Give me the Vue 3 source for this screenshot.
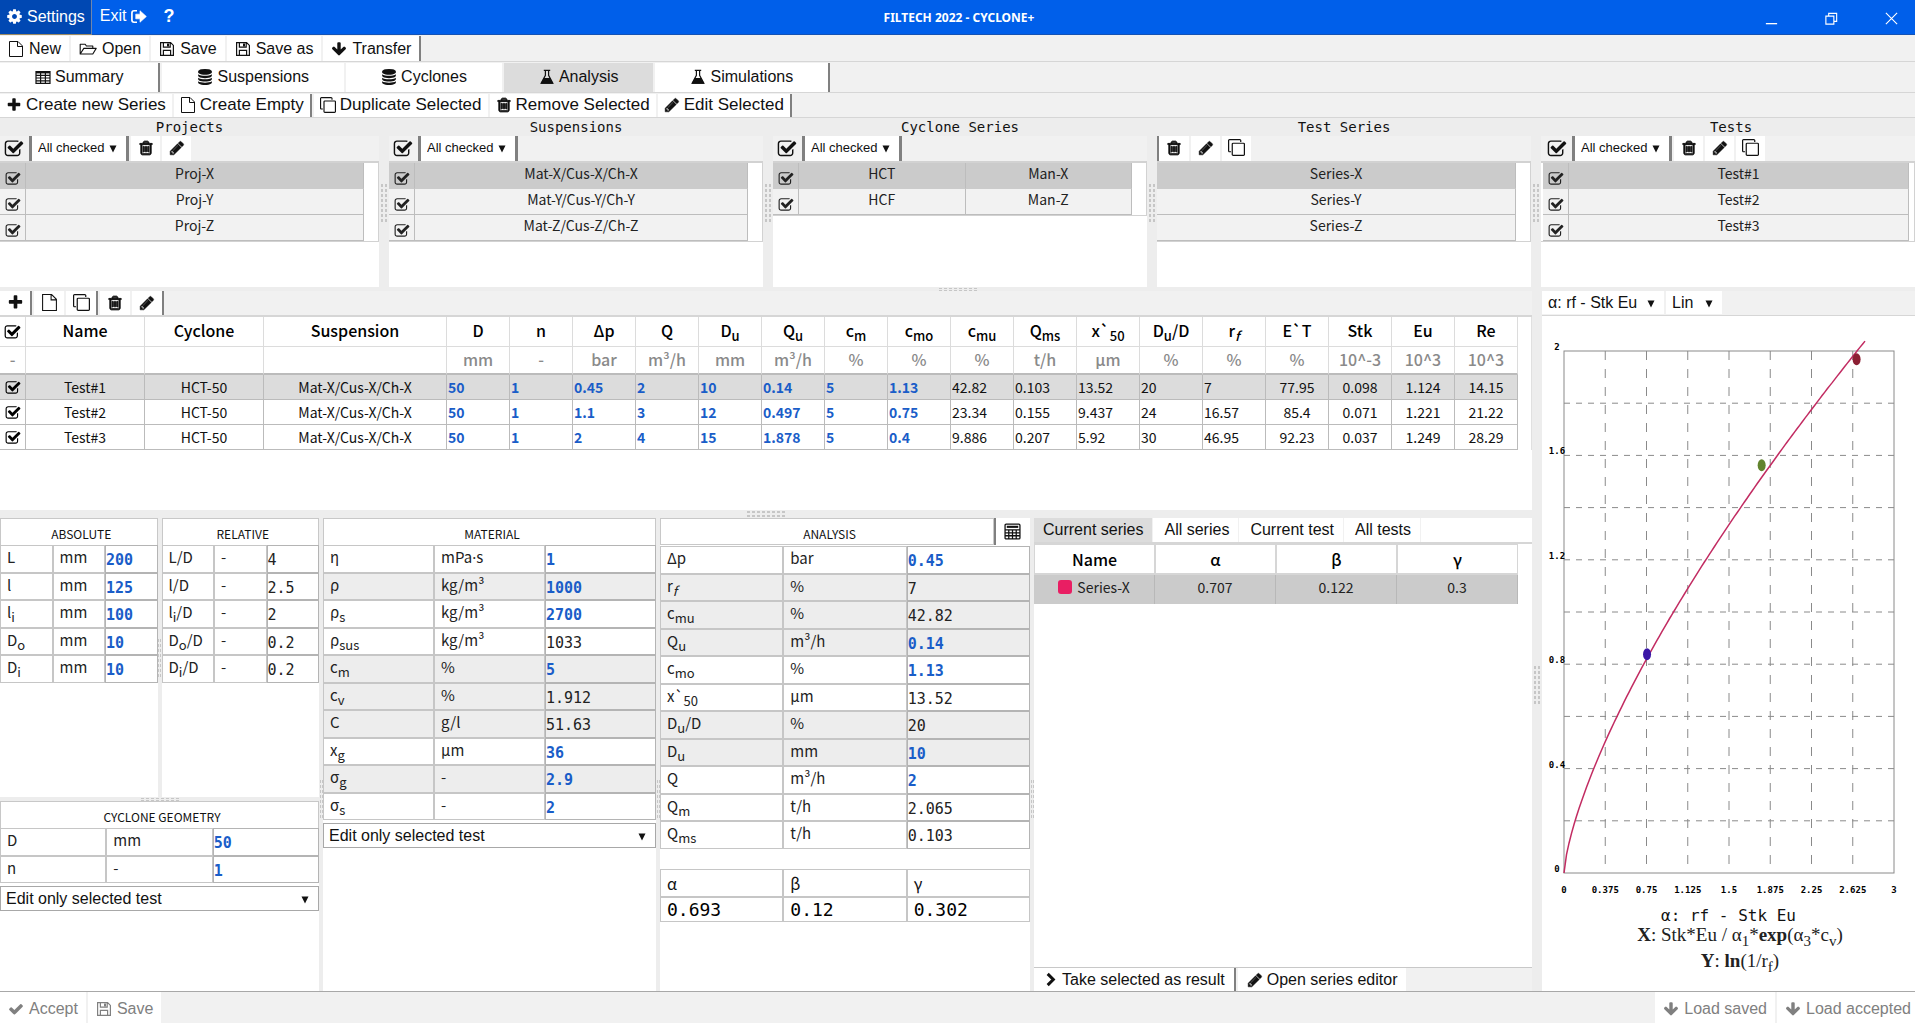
<script setup>
import { h } from 'vue'

const fa = (d, extra = {}) => ({ box: '0 0 1792 1792', parts: [['path', { d, fill: 'currentColor', ...extra }]] })
const line = (parts, box = '0 0 16 16') => ({
  box,
  parts: parts.map(([t, a]) => [t, { fill: 'none', stroke: 'currentColor', 'stroke-width': 1.2, ...a }]),
})

const glyphs = {
  check: fa('M1671 566q0 40-28 68l-724 724-136 136q-28 28-68 28t-68-28l-136-136-362-362q-28-28-28-68t28-68l136-136q28-28 68-28t68 28l294 295 656-657q28-28 68-28t68 28l136 136q28 28 28 68z'),
  checked: fa('M1472 930v318q0 119-84.5 203.5t-203.5 84.5h-832q-119 0-203.5-84.5t-84.5-203.5v-832q0-119 84.5-203.5t203.5-84.5h832q63 0 117 25 15 7 18 23 3 17-9 29l-49 49q-10 10-23 10-3 0-9-2-23-6-45-6h-832q-66 0-113 47t-47 113v832q0 66 47 113t113 47h832q66 0 113-47t47-113v-254q0-13 9-22l64-64q10-10 23-10 6 0 12 3 20 8 20 29zm231-489l-814 814q-24 24-57 24t-57-24l-430-430q-24-24-24-57t24-57l110-110q24-24 57-24t57 24l263 263 647-647q24-24 57-24t57 24l110 110q24 24 24 57t-24 57z'),
  trash: fa('M704 736v576q0 14-9 23t-23 9h-64q-14 0-23-9t-9-23v-576q0-14 9-23t23-9h64q14 0 23 9t9 23zm256 0v576q0 14-9 23t-23 9h-64q-14 0-23-9t-9-23v-576q0-14 9-23t23-9h64q14 0 23 9t9 23zm256 0v576q0 14-9 23t-23 9h-64q-14 0-23-9t-9-23v-576q0-14 9-23t23-9h64q14 0 23 9t9 23zm128 724v-948h-896v948q0 22 7 40.5t14.5 27 10.5 8.5h832q3 0 10.5-8.5t14.5-27 7-40.5zm-672-1076h448l-48-117q-7-9-17-11h-317q-10 2-17 11zm928 32v64q0 14-9 23t-23 9h-96v948q0 83-47 143.5t-113 60.5h-832q-66 0-113-58.5t-47-141.5v-952h-96q-14 0-23-9t-9-23v-64q0-14 9-23t23-9h309l70-167q15-37 54-63t79-26h320q40 0 79 26t54 63l70 167h309q14 0 23 9t9 23z', { stroke: 'currentColor', 'stroke-width': 110 }),
  pencil: fa('M491 1536l91-91-235-235-91 91v107h128v128h107zm523-928q0-22-22-22-10 0-17 7l-542 542q-7 7-7 17 0 22 22 22 10 0 17-7l542-542q7-7 7-17zm-54-192l416 416-832 832h-416v-416zm683 96q0 53-37 90l-166 166-416-416 166-165q36-38 90-38 53 0 91 38l235 234q37 39 37 91z', { stroke: 'currentColor', 'stroke-width': 50 }),
  plus: fa('M1600 736v192q0 40-28 68t-68 28h-416v416q0 40-28 68t-68 28h-192q-40 0-68-28t-28-68v-416h-416q-40 0-68-28t-28-68v-192q0-40 28-68t68-28h416v-416q0-40 28-68t68-28h192q40 0 68 28t28 68v416h416q40 0 68 28t28 68z'),
  clone: fa('M1664 1632v-1088q0-13-9.5-22.5t-22.5-9.5h-1088q-13 0-22.5 9.5t-9.5 22.5v1088q0 13 9.5 22.5t22.5 9.5h1088q13 0 22.5-9.5t9.5-22.5zm128-1088v1088q0 66-47 113t-113 47h-1088q-66 0-113-47t-47-113v-1088q0-66 47-113t113-47h1088q66 0 113 47t47 113zm-384-384v160h-128v-160q0-13-9.5-22.5t-22.5-9.5h-1088q-13 0-22.5 9.5t-9.5 22.5v1088q0 13 9.5 22.5t22.5 9.5h160v128h-160q-66 0-113-47t-47-113v-1088q0-66 47-113t113-47h1088q66 0 113 47t47 113z'),
  gear: fa('M1152 896q0-106-75-181t-181-75-181 75-75 181 75 181 181 75 181-75 75-181zm512-109v222q0 12-8 23t-20 13l-185 28q-19 54-39 91 35 50 107 138 10 12 10 25t-9 23q-27 37-99 108t-94 71q-12 0-26-9l-138-108q-44 23-91 38-16 136-29 186-7 28-36 28h-222q-14 0-24.5-8.5t-11.5-21.5l-28-184q-49-16-90-37l-141 107q-10 9-25 9-14 0-25-11-126-114-165-168-7-10-7-23 0-12 8-23 15-21 51-66.5t54-70.5q-27-50-41-99l-183-27q-13-2-21-12.5t-8-23.5v-222q0-12 8-23t19-13l186-28q14-46 39-92-40-57-107-138-10-12-10-24 0-10 9-23 26-36 98.5-107.5t94.5-71.5q13 0 26 10l138 107q44-23 91-38 16-136 29-186 7-28 36-28h222q14 0 24.5 8.5t11.5 21.5l28 184q49 16 90 37l142-107q9-9 24-9 13 0 25 10 129 119 165 170 7 8 7 22 0 12-8 23-15 21-51 66.5t-54 70.5q26 50 41 98l183 28q13 2 21 12.5t8 23.5z'),
  database: fa('M896 768q237 0 443-43t325-127v170q0 69-103 128t-280 93.5-385 34.5-385-34.5-280-93.5-103-128v-170q119 84 325 127t443 43zm0 768q237 0 443-43t325-127v170q0 69-103 128t-280 93.5-385 34.5-385-34.5-280-93.5-103-128v-170q119 84 325 127t443 43zm0-384q237 0 443-43t325-127v170q0 69-103 128t-280 93.5-385 34.5-385-34.5-280-93.5-103-128v-170q119 84 325 127t443 43zm0-1152q208 0 385 34.5t280 93.5 103 128v128q0 69-103 128t-280 93.5-385 34.5-385-34.5-280-93.5-103-128v-128q0-69 103-128t280-93.5 385-34.5z'),
  down: fa('M1675 832q0 53-37 90l-651 652q-39 37-91 37-53 0-90-37l-651-652q-38-36-38-90 0-53 38-91l74-75q39-37 91-37 53 0 90 37l294 294v-704q0-52 38-90t90-38h128q52 0 90 38t38 90v704l294-294q37-37 90-37 52 0 91 37l75 75q37 39 37 91z'),
  chevron: line([['path', { d: 'M5 2l6 6-6 6', 'stroke-width': 3.2 }]]),
  file: line([['path', { d: 'M1.5 .5h8.500l4.500 4.500V15.500H1.500z M9.500 .5v5h5', 'stroke-width': 1 }]]),
  folder: line([
    ['path', { d: 'M1.200 12.800V3.200h5l1.200 1.800h6.400v2.400 M1.200 13l3.600-5.600h12.400L13.800 13z', 'stroke-linejoin': 'round', 'stroke-width': 1.1 }],
  ], '0 0 18 16'),
  save: line([
    ['path', { d: 'M1.600 1.600h10l2.800 2.800v10H1.600z M4.400 1.600v4.600h6.800V1.600 M4.400 14.400V9.400h7.200v5' }],
    ['path', { d: 'M9 2.400v3', 'stroke-width': 2 }],
  ]),
  table: line([
    ['path', { d: 'M1 2.600h14v11.800H1z M1 6.400h14 M1 9h14 M1 11.800h14 M5.600 4v10.400 M10.400 4v10.400' }],
    ['path', { d: 'M1 3.400h14', 'stroke-width': 2 }],
  ]),
  flask: line([
    ['path', { d: 'M4.800 1.400h6.400 M6.400 1.400v5L2.200 14.200h11.600L9.600 6.400v-5' }],
    ['path', { d: 'M5.200 9.600h5.600l2.600 4.600H2.600z', fill: 'currentColor' }],
  ]),
  exit: line([
    ['path', { d: 'M6.600 2.600H3.800q-2 0-2 2v6.800q0 2 2 2h2.800', 'stroke-width': 1.6 }],
    ['path', { d: 'M5.400 5.800h4V2.600L15.400 8l-6 5.400v-3.200h-4z', fill: 'currentColor', 'stroke-width': 0.6 }],
  ]),
  calc: line([
    ['rect', { x: 1, y: 1, width: 14, height: 14, rx: 1 }],
    ['path', { d: 'M2.600 3.600h10.800', 'stroke-width': 2 }],
    ['path', { d: 'M1 6.400h14 M1 9.200h14 M1 12h14 M4.500 6.400V15 M8 6.400V15 M11.500 6.400V15' }],
  ]),
  minimize: line([['path', { d: 'M2 13.500h12', 'stroke-width': 1.4 }]]),
  restore: line([['path', { d: 'M2 5.500h8.500V14H2z M5 5.500V2.500h8.500V11h-3' }]]),
  close: line([['path', { d: 'M2 2l12 12M14 2L2 14' }]]),
  caret: { box: '0 0 8 8', parts: [['path', { d: 'M0.500 0.500h7L4 7.500z', fill: 'currentColor' }]] },
}

const Icon = ({ name, size = 16 }) => {
  const g = glyphs[name]
  const [, , w, ht] = g.box.split(' ').map(Number)
  return h('svg', { viewBox: g.box, width: Math.round((size * w) / ht), height: size, 'aria-hidden': 'true' },
    g.parts.map(([t, a]) => h(t, a)))
}
Icon.props = ['name', 'size']

const Grip = ({ across, thin }) => {
  const dots = []
  const step = thin ? 2 : 4
  for (let i = 0; i < 8; i++) {
    for (let j = 0; j < 2; j++) {
      const a = i * 5
      const b = j * step
      dots.push(h('rect', {
        x: across ? a : b, y: across ? b : a,
        width: across ? 3 : thin ? 1 : 2, height: across ? (thin ? 1 : 2) : 3, fill: '#c6c6c6',
      }))
    }
  }
  const long = 38
  const short = thin ? 3 : 6
  return h('svg', { width: across ? long : short, height: across ? short : long, 'aria-hidden': 'true' }, dots)
}
Grip.props = { across: Boolean, thin: Boolean }

/* Symbols are written as base_sub_tail, e.g. D_u_/D */
const Sym = ({ t }) => {
  const [base, sub, tail] = t.split('_')
  return h('span', [base, sub ? h('sub', sub === 'f' ? [h('em', 'f')] : sub) : null, tail || ''])
}
Sym.props = ['t']

const fileBar = [
  ['file', 'New'], ['folder', 'Open'], ['save', 'Save'], ['save', 'Save as'], ['down', 'Transfer', true],
]
const tabs = [
  ['table', 'Summary', true], ['database', 'Suspensions'], ['database', 'Cyclones'], ['flask', 'Analysis'],
  ['flask', 'Simulations', true],
]
const seriesBar = [
  ['plus', 'Create new Series'], ['file', 'Create Empty', true], ['clone', 'Duplicate Selected'],
  ['trash', 'Remove Selected'], ['pencil', 'Edit Selected', true],
]

const lists = [
  { title: 'Projects', filter: true, tools: ['trash', 'pencil'], rows: [['Proj-X'], ['Proj-Y'], ['Proj-Z']] },
  { title: 'Suspensions', filter: true, tools: [], rows: [['Mat-X/Cus-X/Ch-X'], ['Mat-Y/Cus-Y/Ch-Y'], ['Mat-Z/Cus-Z/Ch-Z']] },
  { title: 'Cyclone Series', filter: true, tools: [], rows: [['HCT', 'Man-X'], ['HCF', 'Man-Z']] },
  { title: 'Test Series', filter: false, tools: ['trash', 'pencil', 'clone'], rows: [['Series-X'], ['Series-Y'], ['Series-Z']] },
  { title: 'Tests', filter: true, tools: ['trash', 'pencil', 'clone'], rows: [['Test#1'], ['Test#2'], ['Test#3']] },
]
const toolNames = { trash: 'Remove', pencil: 'Edit', clone: 'Duplicate' }

const columns = [
  ['D', 'mm'], ['n', '-'], ['Δp', 'bar'], ['Q', 'm³/h'], ['D_u', 'mm'], ['Q_u', 'm³/h'], ['c_m', '%'], ['c_mo', '%'],
  ['c_mu', '%'], ['Q_ms', 't/h'], ['x`_50', 'µm'], ['D_u_/D', '%'], ['r_f', '%'], ['E`T', '%'],
  ['Stk', '10^-3'], ['Eu', '10^3'], ['Re', '10^3'],
]
const tests = [
  ['Test#1', '50 1 0.45 2 10 0.14 5 1.13 42.82 0.103 13.52 20 7 77.95 0.098 1.124 14.15'],
  ['Test#2', '50 1 1.1 3 12 0.497 5 0.75 23.34 0.155 9.437 24 16.57 85.4 0.071 1.221 21.22'],
  ['Test#3', '50 1 2 4 15 1.878 5 0.4 9.886 0.207 5.92 30 46.95 92.23 0.037 1.249 28.29'],
].map(([name, v]) => ({ name, values: v.split(' ') }))

/* [symbol, unit, value, editable, shaded] */
const absolute = [
  ['L', 'mm', '200', 1], ['l', 'mm', '125', 1], ['l_i', 'mm', '100', 1], ['D_o', 'mm', '10', 1], ['D_i', 'mm', '10', 1],
]
const relative = [
  ['L/D', '-', '4'], ['l/D', '-', '2.5'], ['l_i_/D', '-', '2'], ['D_o_/D', '-', '0.2'], ['D_i_/D', '-', '0.2'],
]
const geometry = [['D', 'mm', '50', 1], ['n', '-', '1', 1]]
const material = [
  ['η', 'mPa·s', '1', 1, 0], ['ρ', 'kg/m³', '1000', 1, 1], ['ρ_s', 'kg/m³', '2700', 1, 0],
  ['ρ_sus', 'kg/m³', '1033', 0, 0], ['c_m', '%', '5', 1, 1], ['c_v', '%', '1.912', 0, 1],
  ['C', 'g/l', '51.63', 0, 1], ['x_g', 'µm', '36', 1, 0], ['σ_g', '-', '2.9', 1, 1], ['σ_s', '-', '2', 1, 0],
]
const analysis = [
  ['Δp', 'bar', '0.45', 1, 0], ['r_f', '%', '7', 0, 1], ['c_mu', '%', '42.82', 0, 1], ['Q_u', 'm³/h', '0.14', 1, 1],
  ['c_mo', '%', '1.13', 1, 0], ['x`_50', 'µm', '13.52', 0, 0], ['D_u_/D', '%', '20', 0, 1],
  ['D_u', 'mm', '10', 1, 1], ['Q', 'm³/h', '2', 1, 0], ['Q_m', 't/h', '2.065', 0, 0], ['Q_ms', 't/h', '0.103', 0, 0],
]

/* The middle dot is full-width in the data face, so it takes its own. */
const unit = (u) => {
  const [a, b] = u.split('·')
  return b ? [a, h('span', { class: 'dot' }, '·'), b] : u
}

const Params = ({ rows, label }) =>
  h('table', { class: 'params', 'aria-label': label }, [
    h('tbody', rows.map(([s, u, v, edit, shade]) =>
      h('tr', { class: { shade } }, [
        h('td', h(Sym, { t: s })),
        h('td', unit(u)),
        h('td', { class: 'val' }, h('input', { type: 'text', value: v, class: { edit }, 'aria-label': `${label} ${s.replace(/_/g, '')}` })),
      ]))),
  ])
Params.props = ['rows', 'label']

/* Chart geometry */
const plot = { x: 22, y: 35, w: 330, h: 522 }
const px = (v) => plot.x + (v / 3) * plot.w
const py = (v) => plot.y + plot.h - (v / 2) * plot.h
const xTicks = [0, 0.375, 0.75, 1.125, 1.5, 1.875, 2.25, 2.625, 3]
const yTicks = [0, 0.4, 0.8, 1.2, 1.6, 2]
const yLines = [0.2, 0.4, 0.6, 0.8, 1, 1.2, 1.4, 1.6, 1.8]
const curve = Array.from({ length: 121 }, (_, i) => {
  const x = (i / 120) * 2.736
  return `${px(x).toFixed(1)},${py(0.503 * Math.pow(x / 0.375, 0.704)).toFixed(1)}`
}).join(' ')
const points = [
  [0.755, 0.838, '#3a17a6'], [1.797, 1.562, '#62842e'], [2.66, 1.968, '#8c1f33'],
]
</script>

<template>
  <div class="app">
    <header class="titlebar">
      <nav class="menu">
        <button class="active"><Icon name="gear" :size="17" />Settings</button>
        <button class="exit">Exit<Icon name="exit" :size="17" /></button>
        <button class="help" aria-label="Help">?</button>
      </nav>
      <h1>FILTECH 2022 - CYCLONE+</h1>
      <div class="window">
        <button aria-label="Minimize"><Icon name="minimize" :size="15" /></button>
        <button aria-label="Restore"><Icon name="restore" :size="15" /></button>
        <button aria-label="Close"><Icon name="close" :size="15" /></button>
      </div>
    </header>

    <div class="bar file">
      <button v-for="b in fileBar" :key="b[1]" :class="{ sep: b[2] }"><Icon :name="b[0]" />{{ b[1] }}</button>
    </div>
    <div class="bar tabs">
      <button v-for="b in tabs" :key="b[1]" :class="{ sep: b[2], on: b[1] === 'Analysis' }"><Icon :name="b[0]" />{{ b[1] }}</button>
    </div>
    <div class="bar series">
      <button v-for="b in seriesBar" :key="b[1]" :class="{ sep: b[2] }"><Icon :name="b[0]" />{{ b[1] }}</button>
    </div>

    <main>
      <div class="lists">
        <template v-for="(l, i) in lists" :key="l.title">
          <div v-if="i" class="sash"><Grip /></div>
          <section class="list">
            <h2>{{ l.title }}</h2>
            <div class="tools">
              <template v-if="l.filter">
                <label class="chk all"><input type="checkbox" checked :aria-label="`All ${l.title}`" /><Icon name="checked" :size="20" /></label>
                <span class="pick small">
                  <select :aria-label="`${l.title} filter`"><option>All checked</option></select>
                  <Icon name="caret" :size="8" />
                </span>
              </template>
              <button v-for="t in l.tools" :key="t" :aria-label="toolNames[t]"><Icon :name="t" :size="t === 'clone' ? 17 : 16" /></button>
            </div>
            <div class="rows">
              <table :aria-label="l.title">
                <tbody>
                  <tr v-for="(r, k) in l.rows" :key="r[0]" :class="{ sel: k === 0 }">
                    <td v-if="l.filter" class="tick">
                      <label class="chk"><input type="checkbox" checked :aria-label="r[0]" /><Icon name="checked" /></label>
                    </td>
                    <td v-for="c in r" :key="c">{{ c }}</td>
                  </tr>
                </tbody>
              </table>
            </div>
          </section>
        </template>
      </div>
      <div class="hsash thin"><Grip across thin /></div>

      <div class="work">
        <div class="left">
          <section class="tests">
            <div class="tools">
              <button class="sep" aria-label="Add"><Icon name="plus" :size="17" /></button>
              <button aria-label="New empty"><Icon name="file" :size="17" /></button>
              <button class="sep" aria-label="Duplicate"><Icon name="clone" :size="17" /></button>
              <button aria-label="Remove"><Icon name="trash" /></button>
              <button class="sep" aria-label="Edit"><Icon name="pencil" /></button>
            </div>
            <div class="grid">
              <table>
                <colgroup>
                  <col class="c-tick" /><col class="c-name" /><col class="c-name" /><col class="c-susp" />
                  <col v-for="c in columns" :key="c[0]" class="c-num" />
                </colgroup>
                <thead>
                  <tr>
                    <th><label class="chk"><input type="checkbox" checked aria-label="All tests" /><Icon name="checked" :size="17" /></label></th>
                    <th>Name</th><th>Cyclone</th><th>Suspension</th>
                    <th v-for="c in columns" :key="c[0]"><Sym :t="c[0]" /></th>
                  </tr>
                  <tr class="units">
                    <th>-</th><th></th><th></th><th></th>
                    <th v-for="c in columns" :key="c[0]">{{ c[1] }}</th>
                  </tr>
                </thead>
                <tbody>
                  <tr v-for="(t, k) in tests" :key="t.name" :class="{ sel: k === 0 }">
                    <td class="tick"><label class="chk"><input type="checkbox" checked :aria-label="t.name" /><Icon name="checked" /></label></td>
                    <td>{{ t.name }}</td><td>HCT-50</td><td>Mat-X/Cus-X/Ch-X</td>
                    <td v-for="(v, j) in t.values" :key="j">
                      <input v-if="j < 13" type="text" :value="v" :class="{ edit: j < 8 }" :aria-label="`${t.name} ${columns[j][0].replace(/_/g, '')}`" />
                      <template v-else>{{ v }}</template>
                    </td>
                  </tr>
                </tbody>
              </table>
            </div>
          </section>
          <div class="hsash"><Grip across /></div>

          <div class="panels">
            <div class="geo">
              <div class="geo-top">
                <section><h3>ABSOLUTE</h3><Params :rows="absolute" label="Absolute" /></section>
                <div class="sash slim"><Grip thin /></div>
                <section><h3>RELATIVE</h3><Params :rows="relative" label="Relative" /></section>
              </div>
              <div class="hsash thin"><Grip across thin /></div>
              <section class="geo-bottom">
                <h3>CYCLONE GEOMETRY</h3>
                <Params :rows="geometry" label="Geometry" />
                <span class="pick wide">
                  <select aria-label="Geometry edit mode"><option>Edit only selected test</option></select>
                  <Icon name="caret" :size="8" />
                </span>
              </section>
            </div>
            <div class="sash slim low"><Grip thin /></div>
            <section class="mat">
              <h3>MATERIAL</h3>
              <Params :rows="material" label="Material" />
              <span class="pick wide">
                <select aria-label="Material edit mode"><option>Edit only selected test</option></select>
                <Icon name="caret" :size="8" />
              </span>
            </section>
            <div class="sash slim low"><Grip thin /></div>
            <section class="ana">
              <div class="ana-head">
                <h3>ANALYSIS</h3>
                <button aria-label="Calculate"><Icon name="calc" :size="17" /></button>
              </div>
              <Params :rows="analysis" label="Analysis" />
              <table class="coef">
                <thead><tr><th>α</th><th>β</th><th>γ</th></tr></thead>
                <tbody><tr><td>0.693</td><td>0.12</td><td>0.302</td></tr></tbody>
              </table>
            </section>
            <div class="sash slim low"><Grip thin /></div>
            <section class="result">
              <div class="subtabs">
                <button class="on">Current series</button><button>All series</button><button>Current test</button><button>All tests</button>
              </div>
              <div class="rtable">
                <table>
                  <thead><tr><th>Name</th><th>α</th><th>β</th><th>γ</th></tr></thead>
                  <tbody><tr><td><i class="swatch"></i>Series-X</td><td>0.707</td><td>0.122</td><td>0.3</td></tr></tbody>
                </table>
              </div>
              <div class="rbar">
                <button class="sep"><Icon name="chevron" :size="15" />Take selected as result</button>
                <button><Icon name="pencil" />Open series editor</button>
              </div>
            </section>
          </div>
        </div>

        <div class="sash low"><Grip /></div>

        <aside class="chart">
          <div class="tools">
            <span class="pick axis">
              <select aria-label="Chart"><option>α: rf - Stk Eu</option></select><Icon name="caret" :size="8" />
            </span>
            <span class="pick scale">
              <select aria-label="Scale"><option>Lin</option></select><Icon name="caret" :size="8" />
            </span>
          </div>
          <svg class="plot" viewBox="0 0 373 586" role="img" aria-label="rf against Stk Eu">
            <g class="gridlines">
              <line v-for="x in xTicks.slice(1, -1)" :key="'x' + x" :x1="px(x)" :x2="px(x)" :y1="plot.y" :y2="plot.y + plot.h" stroke-dasharray="9 9" />
              <line v-for="y in yLines" :key="'y' + y" :x1="plot.x" :x2="plot.x + plot.w" :y1="py(y)" :y2="py(y)" stroke-dasharray="6 6" />
            </g>
            <rect class="frame" :x="plot.x" :y="plot.y" :width="plot.w" :height="plot.h" />
            <text v-for="x in xTicks" :key="'tx' + x" :x="px(x)" y="577">{{ x }}</text>
            <text v-for="y in yTicks" :key="'ty' + y" x="15" :y="py(y) - 1">{{ y }}</text>
            <polyline class="curve" :points="curve" />
            <ellipse v-for="p in points" :key="p[2]" :cx="px(p[0])" :cy="py(p[1])" rx="4" ry="6" :fill="p[2]" />
          </svg>
          <p class="cap">α: rf - Stk Eu</p>
          <p class="eq"><b>X</b>: Stk*Eu / α<sub>1</sub>*<b>exp</b>(α<sub>3</sub>*c<sub>v</sub>)</p>
          <p class="eq"><b>Y</b>: <b>ln</b>(1/r<sub>f</sub>)</p>
        </aside>
      </div>
    </main>

    <footer>
      <button><Icon name="check" />Accept</button>
      <button><Icon name="save" />Save</button>
      <span class="fill"></span>
      <button><Icon name="down" />Load saved</button>
      <button><Icon name="down" />Load accepted</button>
    </footer>
  </div>
</template>

<style>
html, body { background: #f1f1f1; }
</style>

<style scoped>
.app {
  --ui: "Liberation Sans", Arial, sans-serif;
  --data: "Noto Sans CJK SC", "Noto Sans", sans-serif;
  --mono: "DejaVu Sans Mono", monospace;
  display: flex;
  flex-direction: column;
  min-height: 100vh;
  overflow: hidden;
  color: #111;
  font: 16px/20px var(--ui);
}
.app :deep(*) { box-sizing: border-box; }
.app :deep(svg) { flex: none; }
.app :deep(sub) { font-size: 13px; line-height: 0; }
.app :deep(input), select, button { font: inherit; color: inherit; margin: 0; border: 0; border-radius: 0; outline: 0; }
button { display: flex; align-items: center; justify-content: center; gap: 4px; padding: 0 9px; background: #fff; white-space: nowrap; cursor: pointer; }
h1, h2, h3, p { margin: 0; font-weight: 400; }
table { border-collapse: separate; border-spacing: 0; width: 100%; table-layout: fixed; }

.titlebar { display: grid; grid-template-columns: 1fr auto 1fr; height: 35px; background: #005fea; border-bottom: 1px solid #1553b4; color: #fff; }
.titlebar button { background: none; }
.menu { display: flex; }
.menu .active { background: #0048b3; border-right: 1px solid #6f86ad; border-bottom: 1px solid #9c8a62; padding: 0 6px 1px; margin-bottom: -1px; }
.menu .exit { padding: 0 8px 2px; }
.menu .help { padding: 0 8px 2px; font: bold 18px/20px var(--ui); }
h1 { align-self: center; font: 700 12px/16px "Noto Sans", var(--ui); padding: 2px 0 0 3px; }
.window { display: flex; justify-content: flex-end; gap: 12px; }
.window button { width: 48px; padding-top: 2px; }

.bar { display: flex; gap: 2px; padding-top: 1px; border-bottom: 1px solid #d6d6d6; background: #f1f1f1; }
.bar.file { height: 27px; }
.bar.file button { gap: 5px; padding: 0 8px; }
.bar.tabs { height: 31px; }
.bar.tabs button { padding: 0 35px 2px; }
.bar.tabs .on { background: #dcdcdc; }
.bar.series { height: 25px; font-size: 17px; }
.bar.series button { padding: 0 6px 2px; }
.sep { border-right: 2px solid #808080; }

main { flex: 1; display: flex; flex-direction: column; }
.sash { flex: none; width: 10px; display: flex; align-items: center; justify-content: center; background: #ededed; }
.sash.slim { width: 4px; }
.sash.low { padding-top: 88px; }
.hsash { flex: none; height: 8px; display: flex; align-items: center; justify-content: center; background: #ededed; }
.hsash.thin { height: 4px; }

.lists { display: flex; height: 169px; }
.list { flex: 374; min-width: 0; display: flex; flex-direction: column; background: #fff; }
.list:first-child { flex: 379; }
h2 { height: 18px; background: #ededed; text-align: center; font: 14px/18px var(--mono); }
.tools { display: flex; gap: 2px; background: #f1f1f1; flex: none; }
.list .tools { height: 27px; border-bottom: 2px solid #d2d2d2; }
.list .tools button { width: 29px; padding: 0 0 2px; }
.list .tools > button:first-child { width: 32px; border-left: 2px solid #808080; }
.chk { position: relative; display: inline-flex; vertical-align: middle; }
.chk input { position: absolute; inset: 0; appearance: none; }
.chk.all { padding: 0 3px 0 4px; align-self: center; }
.pick { position: relative; display: flex; background: #fff; }
.pick select { appearance: none; background: none; width: 100%; padding: 0 20px 0 8px; }
.pick svg { position: absolute; right: 9px; top: 9px; pointer-events: none; }
.pick.small { width: 100px; font-size: 13px; border: solid #808080; border-width: 0 3px; }
.pick.small select { padding: 0 18px 2px 6px; }
.rows { padding-right: 14px; border-bottom: 1px solid #d2d2d2; border-right: 1px solid #d2d2d2; }
.list:last-child .tools { padding-left: 2px; }
.list:last-child .rows { padding: 0 5px 0 2px; }
.list:last-child h2 { padding-left: 6px; }
.rows td { height: 26px; padding: 0 0 6px; text-align: center; font: 14px/18px var(--data); background: #f2f2f2; border: solid #bdbdbd; border-width: 0 1px 1px 0; color: #222; }
.rows tr.sel td { background: #cbcbcb; border-bottom-color: #cbcbcb; }
.rows .tick { width: 26px; padding: 4px 0 0; line-height: 16px; }
.tick { color: #000; }

.work { flex: 1; display: flex; }
.left { flex: 1532; min-width: 0; display: flex; flex-direction: column; }
.tests { height: 219px; background: #fff; }
.tests .tools { height: 26px; border-bottom: 2px solid #d6d6d6; }
.tests .tools button { width: 30px; padding: 0 0 1px; }
.tests .tools .sep { width: 32px; }
.grid { padding-right: 13px; border-right: 1px solid #e0e0e0; }
.c-tick { width: 26px; }
.c-name { width: 119px; }
.c-susp { width: 183px; }
.c-num { width: 63px; }
.grid th { height: 30px; padding: 0 0 3px; border: solid #dcdcdc; border-width: 0 1px 1px 0; font: 500 16px/20px var(--data); color: #000; }
.grid .units th { height: 28px; padding: 0 0 2px; color: #8a8a8a; border-bottom: 2px solid #bbb; }
.grid td { height: 25px; padding: 0; text-align: center; border: solid #bbb; border-width: 0 1px 1px 0; font: 14px/20px var(--data); }
.grid .tick { padding-bottom: 3px; }
.grid tr.sel td { background: #dcdcdc; }
.grid td input { display: block; width: 100%; height: 24px; padding: 0 0 0 1px; background: none; }
.app :deep(.edit) { color: #1a5dc8; font-weight: 700; }

.panels { flex: 1; display: flex; }
.panels section { background: #fff; min-width: 0; }
.geo { flex: 319; min-width: 0; display: flex; flex-direction: column; }
.geo-top { display: flex; height: 279px; }
.geo-top section { flex: 1; }
.geo-bottom { flex: 1; }
.mat { flex: 333; }
.ana { flex: 370; }
.result { flex: 498; display: flex; flex-direction: column; }
h3 { height: 27px; border: 1px solid #c8c8c8; border-bottom: 0; padding: 6px 0 0 5px; text-align: center; font: 12px/18px var(--data); }
.panels :deep(.params) { border-collapse: separate; border-spacing: 0; width: 100%; table-layout: fixed; }
.panels :deep(.params td) { height: 27px; padding: 0 0 4px 6px; border: 1px solid #c6c6c6; font: 15px/20px var(--data); color: #222; }
.panels :deep(.params tr:nth-child(odd) td) { height: 28px; }
.panels :deep(.params .shade td) { background: #ededed; }
.panels :deep(.params td.val) { padding: 2px 0 0; border-color: #b4b4b4; }
.panels :deep(.params input) { display: block; width: 100%; height: 23px; padding: 0; background: none; font-family: var(--mono); }
.panels :deep(.dot) { font-family: "Noto Sans", sans-serif; }
.pick.wide { height: 25px; margin-top: 3px; border: 1px solid #a8a8a8; }
.pick.wide select { padding: 0 20px 0 5px; }
.ana-head { display: flex; margin-bottom: 1px; }
.ana-head h3 { flex: 1; border-bottom: 1px solid #c8c8c8; }
.ana-head button { width: 36px; border-left: 2px solid #808080; padding: 0 2px 1px 0; }
.coef { margin-top: 20px; }
.coef th, .coef td { border: 1px solid #c6c6c6; text-align: left; padding: 0 6px; font-weight: 400; height: 28px; }
.coef th { font: 16px/20px var(--data); }
.coef td { height: 25px; font: 18px/20px var(--mono); color: #000; }

.subtabs { display: flex; gap: 2px; height: 26px; border-bottom: 2px solid #d6d6d6; }
.subtabs button { padding: 0 9px 1px; border-right: 1px solid #f1f1f1; }
.subtabs .on { background: #dcdcdc; }
.rtable { flex: 1; }
.rtable table { width: calc(100% - 14px); }
.rtable th { height: 31px; padding: 0; border: solid #d6d6d6; border-width: 1px 1px 2px; font: 500 16px/20px var(--data); color: #000; }
.rtable td { height: 29px; padding: 0 0 5px; background: #cbcbcb; text-align: center; font: 14px/20px var(--data); color: #222; border-right: 1px solid #b8b8b8; }
.swatch { display: inline-block; width: 14px; height: 14px; margin-right: 5px; border-radius: 3px; background: #e91e63; vertical-align: -1px; }
.rbar { display: flex; gap: 2px; height: 24px; border-top: 1px solid #c8c8c8; background: #f1f1f1; }

.chart { flex: 373; min-width: 0; background: #fff; }
.chart .tools { height: 25px; border-bottom: 1px solid #d6d6d6; padding-bottom: 1px; }
.pick.axis { width: 122px; }
.pick.axis select { padding-left: 6px; }
.pick.scale { width: 56px; }
.pick.scale select { padding-left: 6px; }
.plot { display: block; width: 100%; }
.plot text { font: bold 9px var(--mono); text-anchor: middle; fill: #000; }
.gridlines line { stroke: #8a8a8a; }
.frame { fill: none; stroke: #8a8a8a; }
.curve { fill: none; stroke: #c22c62; stroke-width: 1.5; }
.cap { font: 16px/18px var(--mono); text-align: center; padding-top: 5px; }
.eq { font: 19px/20px "Liberation Serif", serif; text-align: center; padding-left: 23px; color: #222; }
.eq + .eq { padding-top: 6px; }
.app .eq sub { font-size: 15px; }

footer { display: flex; gap: 2px; height: 32px; border-top: 1px solid #a8a8a8; background: #f1f1f1; color: #808080; }
footer button { gap: 5px; padding: 3px 8px 0; }
footer button:last-child { padding-right: 4px; }
.fill { flex: 1; }
</style>
